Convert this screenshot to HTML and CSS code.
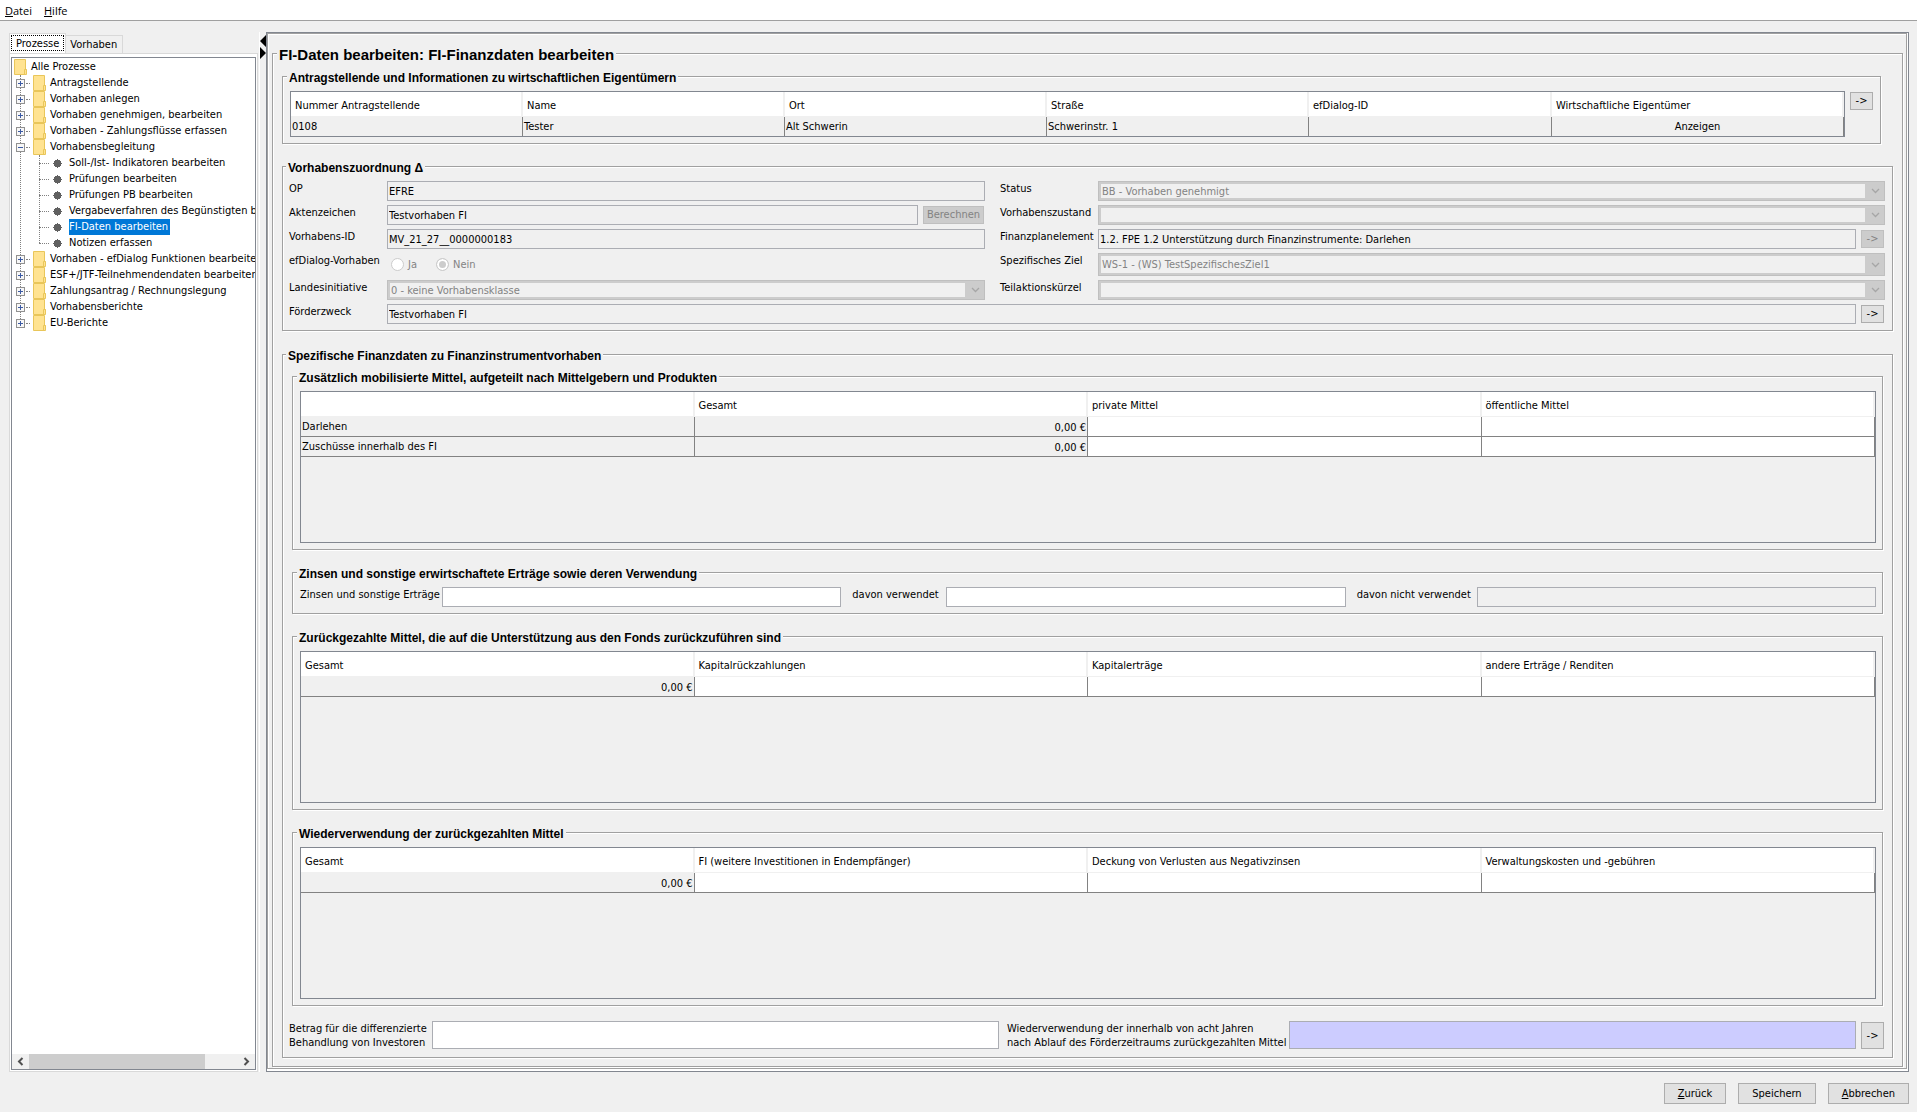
FILE: index.html
```html
<!DOCTYPE html>
<html lang="de">
<head>
    <meta charset="UTF-8">
    <meta name="viewport" content="width=device-width, initial-scale=1.0">
    <title>FI-Daten bearbeiten</title>
    <link rel="stylesheet" href="styles.css">
</head>
<body>
    <svg class="sprite" aria-hidden="true">
        <symbol id="folder" viewBox="0 0 13 16">
            <path d="M0.5 0.5h11v10h1v5h-12z" fill="#ffe391" stroke="#e9c65a"/>
            <path d="M10.5 15.5v-5h2" fill="none" stroke="#e9c65a"/>
        </symbol>
        <symbol id="plus" viewBox="0 0 9 9">
            <rect x="0.5" y="0.5" width="8" height="8" fill="#f7f7f7" stroke="#919191"/>
            <path d="M2 4.5h5M4.5 2v5" stroke="#3b5aa3"/>
        </symbol>
        <symbol id="minus" viewBox="0 0 9 9">
            <rect x="0.5" y="0.5" width="8" height="8" fill="#f7f7f7" stroke="#919191"/>
            <path d="M2 4.5h5" stroke="#3b5aa3"/>
        </symbol>
        <symbol id="leaf" viewBox="0 0 9 9">
            <path d="M4 0h1v1h2v1h1v2h1v1h-1v2h-1v1h-2v1h-1v-1h-2v-1h-1v-2h-1v-1h1v-2h1v-1h2z" fill="#606060"/>
        </symbol>
        <symbol id="chevron" viewBox="0 0 9 6">
            <path d="M1 1l3.500 3.500l3.500-3.500" fill="none" stroke="#a6a6a6" stroke-width="1.300"/>
        </symbol>
    </svg>

    <nav class="menubar">
        <a href="#"><u>D</u>atei</a>
        <a href="#"><u>H</u>ilfe</a>
    </nav>

    <div class="workspace">
        <aside class="sidebar">
            <div class="tabs">
                <button class="tab active">Prozesse</button>
                <button class="tab">Vorhaben</button>
            </div>
            <div class="tab-panel">
                <div class="tree">
                    <div class="tree-view">
                        <div class="node root"><svg class="folder"><use href="#folder"/></svg><span>Alle Prozesse</span></div>
                        <ul class="branches">
                            <li><div class="node"><button class="toggle" aria-label="Öffnen"><svg><use href="#plus"/></svg></button><svg class="folder"><use href="#folder"/></svg><span>Antragstellende</span></div></li>
                            <li><div class="node"><button class="toggle" aria-label="Öffnen"><svg><use href="#plus"/></svg></button><svg class="folder"><use href="#folder"/></svg><span>Vorhaben anlegen</span></div></li>
                            <li><div class="node"><button class="toggle" aria-label="Öffnen"><svg><use href="#plus"/></svg></button><svg class="folder"><use href="#folder"/></svg><span>Vorhaben genehmigen, bearbeiten</span></div></li>
                            <li><div class="node"><button class="toggle" aria-label="Öffnen"><svg><use href="#plus"/></svg></button><svg class="folder"><use href="#folder"/></svg><span>Vorhaben - Zahlungsflüsse erfassen</span></div></li>
                            <li>
                                <div class="node"><button class="toggle" aria-label="Schließen"><svg><use href="#minus"/></svg></button><svg class="folder"><use href="#folder"/></svg><span>Vorhabensbegleitung</span></div>
                                <ul class="leaves">
                                    <li class="node"><svg class="leaf"><use href="#leaf"/></svg><span>Soll-/Ist- Indikatoren bearbeiten</span></li>
                                    <li class="node"><svg class="leaf"><use href="#leaf"/></svg><span>Prüfungen bearbeiten</span></li>
                                    <li class="node"><svg class="leaf"><use href="#leaf"/></svg><span>Prüfungen PB bearbeiten</span></li>
                                    <li class="node"><svg class="leaf"><use href="#leaf"/></svg><span>Vergabeverfahren des Begünstigten bearbeiten</span></li>
                                    <li class="node"><svg class="leaf"><use href="#leaf"/></svg><span class="selected">FI-Daten bearbeiten</span></li>
                                    <li class="node"><svg class="leaf"><use href="#leaf"/></svg><span>Notizen erfassen</span></li>
                                </ul>
                            </li>
                            <li><div class="node"><button class="toggle" aria-label="Öffnen"><svg><use href="#plus"/></svg></button><svg class="folder"><use href="#folder"/></svg><span>Vorhaben - efDialog Funktionen bearbeiten</span></div></li>
                            <li><div class="node"><button class="toggle" aria-label="Öffnen"><svg><use href="#plus"/></svg></button><svg class="folder"><use href="#folder"/></svg><span>ESF+/JTF-Teilnehmendendaten bearbeiten</span></div></li>
                            <li><div class="node"><button class="toggle" aria-label="Öffnen"><svg><use href="#plus"/></svg></button><svg class="folder"><use href="#folder"/></svg><span>Zahlungsantrag / Rechnungslegung</span></div></li>
                            <li><div class="node"><button class="toggle" aria-label="Öffnen"><svg><use href="#plus"/></svg></button><svg class="folder"><use href="#folder"/></svg><span>Vorhabensberichte</span></div></li>
                            <li><div class="node"><button class="toggle" aria-label="Öffnen"><svg><use href="#plus"/></svg></button><svg class="folder"><use href="#folder"/></svg><span>EU-Berichte</span></div></li>
                        </ul>
                    </div>
                    <div class="scrollbar">
                        <svg viewBox="0 0 17 15"><path d="M10.500 4l-3.500 3.500l3.500 3.500" fill="none" stroke="#505050" stroke-width="2"/></svg>
                        <div class="track"><div class="thumb"></div></div>
                        <svg viewBox="0 0 17 15"><path d="M6.500 4l3.500 3.500l-3.500 3.500" fill="none" stroke="#505050" stroke-width="2"/></svg>
                    </div>
                </div>
            </div>
        </aside>

        <div class="splitter">
            <svg viewBox="0 0 6 24"><path d="M6 0v12l-6-6zM0 12v12l6-6z"/></svg>
        </div>

        <main class="content">
            <div class="content-inner">
                <fieldset class="page">
                    <legend>FI-Daten bearbeiten: FI-Finanzdaten bearbeiten</legend>

                    <fieldset class="group applicants">
                        <legend>Antragstellende und Informationen zu wirtschaftlichen Eigentümern</legend>
                        <div class="pane-row">
                            <div class="pane pane-short">
                                <table>
                                    <colgroup>
                                        <col class="col-number"><col class="col-mid"><col class="col-mid"><col class="col-mid"><col class="col-dialog"><col class="col-owner">
                                    </colgroup>
                                    <thead>
                                        <tr><th>Nummer Antragstellende</th><th>Name</th><th>Ort</th><th>Straße</th><th>efDialog-ID</th><th>Wirtschaftliche Eigentümer</th></tr>
                                    </thead>
                                    <tbody>
                                        <tr><td>0108</td><td>Tester</td><td>Alt Schwerin</td><td>Schwerinstr. 1</td><td></td><td class="center">Anzeigen</td></tr>
                                    </tbody>
                                </table>
                            </div>
                            <button class="btn go">-&gt;</button>
                        </div>
                    </fieldset>

                    <fieldset class="group">
                        <legend>Vorhabenszuordnung Δ</legend>
                        <div class="form-grid">
                            <label for="op">OP</label>
                            <input type="text" id="op" value="EFRE" readonly>
                            <label for="status" class="second">Status</label>
                            <div class="combo"><select id="status" disabled><option>BB - Vorhaben genehmigt</option></select><svg><use href="#chevron"/></svg></div>

                            <label for="aktenzeichen">Aktenzeichen</label>
                            <div class="with-button">
                                <input type="text" id="aktenzeichen" value="Testvorhaben FI" readonly>
                                <button class="btn calc" disabled>Berechnen</button>
                            </div>
                            <label for="zustand" class="second">Vorhabenszustand</label>
                            <div class="combo"><select id="zustand" disabled><option></option></select><svg><use href="#chevron"/></svg></div>

                            <label for="vorhabens-id">Vorhabens-ID</label>
                            <input type="text" id="vorhabens-id" value="MV_21_27__0000000183" readonly>
                            <label for="finanzplan" class="second">Finanzplanelement</label>
                            <div class="with-button">
                                <input type="text" id="finanzplan" value="1.2. FPE 1.2 Unterstützung durch Finanzinstrumente: Darlehen" readonly>
                                <button class="btn go" disabled>-&gt;</button>
                            </div>

                            <span class="label">efDialog-Vorhaben</span>
                            <div class="radios">
                                <input type="radio" name="efdialog" id="ja" disabled><label for="ja">Ja</label>
                                <input type="radio" name="efdialog" id="nein" checked disabled><label for="nein">Nein</label>
                            </div>
                            <label for="ziel" class="second">Spezifisches Ziel</label>
                            <div class="combo tall"><select id="ziel" disabled><option>WS-1 - (WS) TestSpezifischesZiel1</option></select><svg><use href="#chevron"/></svg></div>

                            <label for="landesinitiative">Landesinitiative</label>
                            <div class="combo"><select id="landesinitiative" disabled><option>0 - keine Vorhabensklasse</option></select><svg><use href="#chevron"/></svg></div>
                            <label for="teilaktion" class="second">Teilaktionskürzel</label>
                            <div class="combo"><select id="teilaktion" disabled><option></option></select><svg><use href="#chevron"/></svg></div>

                            <label for="foerderzweck">Förderzweck</label>
                            <div class="with-button wide">
                                <input type="text" id="foerderzweck" value="Testvorhaben FI" readonly>
                                <button class="btn go">-&gt;</button>
                            </div>
                        </div>
                    </fieldset>

                    <fieldset class="group finance">
                        <legend>Spezifische Finanzdaten zu Finanzinstrumentvorhaben</legend>

                        <fieldset class="group sub">
                            <legend>Zusätzlich mobilisierte Mittel, aufgeteilt nach Mittelgebern und Produkten</legend>
                            <div class="pane">
                                <table>
                                    <thead>
                                        <tr><th></th><th>Gesamt</th><th>private Mittel</th><th>öffentliche Mittel</th></tr>
                                    </thead>
                                    <tbody>
                                        <tr><td>Darlehen</td><td class="num">0,00 €</td><td class="edit"></td><td class="edit"></td></tr>
                                        <tr><td>Zuschüsse innerhalb des FI</td><td class="num">0,00 €</td><td class="edit"></td><td class="edit"></td></tr>
                                    </tbody>
                                </table>
                            </div>
                        </fieldset>

                        <fieldset class="group sub">
                            <legend>Zinsen und sonstige erwirtschaftete Erträge sowie deren Verwendung</legend>
                            <div class="interest-row">
                                <label for="zinsen">Zinsen und sonstige Erträge</label>
                                <input type="text" id="zinsen">
                                <label for="verwendet">davon verwendet</label>
                                <input type="text" id="verwendet">
                                <label for="nicht-verwendet">davon nicht verwendet</label>
                                <input type="text" id="nicht-verwendet" readonly>
                            </div>
                        </fieldset>

                        <fieldset class="group sub">
                            <legend>Zurückgezahlte Mittel, die auf die Unterstützung aus den Fonds zurückzuführen sind</legend>
                            <div class="pane">
                                <table>
                                    <thead>
                                        <tr><th>Gesamt</th><th>Kapitalrückzahlungen</th><th>Kapitalerträge</th><th>andere Erträge / Renditen</th></tr>
                                    </thead>
                                    <tbody>
                                        <tr><td class="num">0,00 €</td><td class="edit"></td><td class="edit"></td><td class="edit"></td></tr>
                                    </tbody>
                                </table>
                            </div>
                        </fieldset>

                        <fieldset class="group sub">
                            <legend>Wiederverwendung der zurückgezahlten Mittel</legend>
                            <div class="pane">
                                <table>
                                    <thead>
                                        <tr><th>Gesamt</th><th>FI (weitere Investitionen in Endempfänger)</th><th>Deckung von Verlusten aus Negativzinsen</th><th>Verwaltungskosten und -gebühren</th></tr>
                                    </thead>
                                    <tbody>
                                        <tr><td class="num">0,00 €</td><td class="edit"></td><td class="edit"></td><td class="edit"></td></tr>
                                    </tbody>
                                </table>
                            </div>
                        </fieldset>

                        <div class="amount-row">
                            <label for="betrag">Betrag für die differenzierte<br>Behandlung von Investoren</label>
                            <input type="text" id="betrag">
                            <label for="wiederverwendung">Wiederverwendung der innerhalb von acht Jahren<br>nach Ablauf des Förderzeitraums zurückgezahlten Mittel</label>
                            <div class="with-button">
                                <input type="text" id="wiederverwendung" class="required">
                                <button class="btn go">-&gt;</button>
                            </div>
                        </div>
                    </fieldset>
                </fieldset>
            </div>
        </main>
    </div>

    <footer class="actions">
        <button class="btn"><u>Z</u>urück</button>
        <button class="btn">Speichern</button>
        <button class="btn"><u>A</u>bbrechen</button>
    </footer>
</body>
</html>
```
FILE: styles.css
```css
* {
    box-sizing: border-box;
}

body {
    margin: 0;
    min-height: 100vh;
    display: flex;
    flex-direction: column;
    background: #f0f0f0;
    color: #000;
    font-family: Tahoma, "DejaVu Sans Condensed", sans-serif;
    font-size: 11px;
    line-height: 14px;
}

button, input, select {
    margin: 0;
    font: inherit;
    color: inherit;
    border-radius: 0;
}

svg {
    display: block;
    flex: none;
}

ul {
    list-style: none;
    margin: 0;
    padding: 0;
}

label, .label {
    padding-top: 1px;
    white-space: nowrap;
}

.sprite {
    display: none;
}

/* menu */
.menubar {
    display: flex;
    gap: 12px;
    height: 21px;
    padding: 4px 5px 2px;
    background: #fff;
    border-bottom: 1px solid #a0a0a0;
    font-family: "Segoe UI", "Open Sans", sans-serif;
}

.menubar a {
    color: #000;
    text-decoration: none;
}

.workspace {
    flex: 1;
    display: flex;
    padding: 11px 8px 0 9px;
}

/* process tree */
.sidebar {
    display: flex;
    flex-direction: column;
    width: 249px;
}

.tabs {
    display: flex;
    align-items: flex-end;
    height: 21px;
}

.tab {
    height: 18px;
    padding: 1px 5px 0 4px;
    background: #f0f0f0;
    border: 1px solid #d9d9d9;
    border-left: 0;
    border-bottom: 0;
}

.tab.active {
    height: 20px;
    background: #fff;
    border-left: 1px solid #d9d9d9;
    outline: 1px dotted #000;
    outline-offset: -3px;
    padding: 0 6px;
}

.tab-panel {
    flex: 1;
    display: flex;
    padding: 3px 1px 1px;
    background: #fff;
    border: 1px solid #d9d9d9;
}

.tree {
    flex: 1;
    min-width: 0;
    display: flex;
    flex-direction: column;
    border: 1px solid #828790;
}

.tree-view {
    flex: 1;
    padding-top: 1px;
    overflow: hidden;
    white-space: nowrap;
}

.node {
    display: flex;
    align-items: center;
    height: 16px;
}

.node span {
    line-height: 16px;
}

.root {
    padding-left: 2px;
}

.folder {
    width: 13px;
    height: 16px;
    margin-right: 4px;
}

.branches {
    position: relative;
    padding-left: 4px;
}

.branches::before {
    content: "";
    position: absolute;
    left: 8px;
    top: 0;
    bottom: 8px;
    border-left: 1px dotted #808080;
}

.toggle {
    position: relative;
    flex: none;
    width: 9px;
    height: 9px;
    margin-right: 8px;
    padding: 0;
    border: 0;
    background: none;
}

.toggle::after {
    content: "";
    position: absolute;
    left: 10px;
    top: 4px;
    width: 4px;
    border-top: 1px dotted #808080;
}

.toggle svg {
    width: 9px;
    height: 9px;
}

.leaves {
    position: relative;
    margin-left: 23px;
}

.leaves::before {
    content: "";
    position: absolute;
    left: 0;
    top: 0;
    bottom: 8px;
    border-left: 1px dotted #808080;
}

.leaves .node::before {
    content: "";
    flex: none;
    width: 10px;
    margin-right: 4px;
    border-top: 1px dotted #808080;
}

.leaf {
    width: 9px;
    height: 9px;
    margin-right: 7px;
}

.selected {
    background: #0078d7;
    color: #fff;
    padding-right: 2px;
}

.scrollbar {
    display: flex;
    height: 15px;
    background: #f0f0f0;
}

.scrollbar svg {
    width: 17px;
    height: 15px;
}

.track {
    flex: 1;
}

.thumb {
    width: 84%;
    height: 15px;
    background: #cdcdcd;
}

.splitter {
    width: 8px;
    padding: 3px 0 0 1px;
    border-left: 1px solid #f0f0f0;
    box-shadow: inset 1px 0 #fff;
}

.splitter svg {
    width: 6px;
    height: 24px;
}

/* form frame */
.content {
    flex: 1;
    min-width: 0;
    padding: 0 1px 2px 0;
    border: 1px solid #828790;
    background: #fff;
}

.content-inner {
    height: 100%;
    padding: 11px 3px 1px 4px;
    background: #f0f0f0;
    border: 1px solid #a0a0a0;
    box-shadow: inset 1px 1px #fff;
}

fieldset {
    min-width: 0;
    margin: 0;
    border: 1px solid #a0a0a0;
    box-shadow: inset 1px 1px #fff, 1px 1px #fff;
}

legend {
    padding: 3px 2px 0;
    background: #f0f0f0;
    font-family: Arial, "Liberation Sans", sans-serif;
    font-weight: bold;
}

.page {
    padding: 7px 9px 8px;
}

.page > legend {
    margin-left: -5px;
    font-size: 15px;
    line-height: 14px;
}

.group {
    margin-top: 15px;
    padding: 7px 7px 6px 6px;
}

.group > legend {
    margin-left: -3px;
    font-size: 12px;
    line-height: 12px;
}

.applicants {
    margin: 0 12px 0 0;
    padding-left: 7px;
}

.finance {
    margin-top: 16px;
    padding-bottom: 7px;
}

.sub {
    margin: 15px 2px 0 3px;
    padding: 7px 6px 6px 7px;
}

.finance > legend + .sub {
    margin-top: 0;
}

/* tables */
.pane-row {
    display: flex;
    gap: 5px;
}

.pane-row .pane {
    flex: 1;
}

.pane-row .btn {
    height: 18px;
    margin-top: 1px;
}

.pane {
    height: 152px;
    overflow: hidden;
    border: 1px solid #828790;
}

.pane-short {
    height: 46px;
}

table {
    width: 100%;
    table-layout: fixed;
    border-collapse: separate;
    border-spacing: 0;
}

th {
    height: 25px;
    padding: 3px 4px 0;
    background: #fff;
    border-right: 2px solid #f0f0f0;
    border-bottom: 1px solid #f0f0f0;
    font-weight: normal;
    text-align: left;
    white-space: nowrap;
}

td {
    height: 20px;
    padding: 0 1px;
    border-right: 1px solid #828282;
    border-bottom: 1px solid #828282;
}

.num {
    padding-top: 2px;
    text-align: right;
}

.center {
    text-align: center;
}

.edit {
    background: #fff;
}

.col-number {
    width: 232px;
}

.col-mid {
    width: 262px;
}

.col-dialog {
    width: 243px;
}

.col-owner {
    width: 292px;
}

/* controls */
input[type="text"] {
    width: 100%;
    min-width: 0;
    height: 20px;
    padding: 1px 1px 0;
    background: #fff;
    border: 1px solid #abadb3;
}

input[type="text"]:read-only {
    background: #f0f0f0;
}

input[type="text"].required {
    background: #ccccff;
}

.combo {
    display: flex;
    align-items: center;
    height: 20px;
    padding: 2px 4px 2px 2px;
    background: #ccc;
    border: 1px solid #bfbfbf;
}

.combo.tall {
    height: 23px;
}

.combo select {
    flex: 1;
    min-width: 0;
    align-self: stretch;
    margin-right: 6px;
    padding: 1px 1px 0;
    appearance: none;
    background: #f0f0f0;
    border: 0;
    color: #838383;
    opacity: 1;
}

.combo svg {
    width: 9px;
    height: 6px;
}

.btn {
    height: 21px;
    padding: 0 13px;
    background: #e1e1e1;
    border: 1px solid #adadad;
    white-space: nowrap;
}

.btn:disabled {
    background: #ccc;
    border-color: #bfbfbf;
    color: #838383;
}

.btn.go {
    flex: none;
    width: 23px;
    padding: 0;
}

.btn.calc {
    padding: 0 3px;
}

.with-button {
    display: flex;
    gap: 5px;
    padding-right: 1px;
}

.with-button .btn {
    height: auto;
    margin: 1px 0;
    line-height: 12px;
}

.form-grid {
    display: grid;
    grid-template-columns: 98px 19fr 113px 25fr;
    row-gap: 4px;
}

.second {
    padding-left: 15px;
}

.wide {
    grid-column: 2 / -1;
}

.radios {
    display: flex;
    align-items: center;
    padding-left: 4px;
    color: #838383;
}

.radios label {
    margin: 0 19px 0 4px;
    padding: 0;
}

input[type="radio"] {
    appearance: none;
    width: 13px;
    height: 13px;
    background: #fff;
    border: 1px solid #ccc;
    border-radius: 50%;
}

input[type="radio"]:checked {
    background: #ccc;
    box-shadow: inset 0 0 0 2px #fff;
}

.interest-row {
    display: grid;
    grid-template-columns: 142px 1fr 105px 1fr 131px 1fr;
}

.interest-row input ~ label {
    padding-left: 11px;
}

.amount-row {
    display: grid;
    grid-template-columns: 143px 1fr 290px 1fr 29px;
    margin-top: 15px;
}

.amount-row input[type="text"] {
    height: 28px;
}

.amount-row input ~ label {
    padding-left: 8px;
}

.amount-row .with-button {
    grid-column: 4 / -1;
}

/* footer */
.actions {
    display: flex;
    justify-content: flex-end;
    gap: 12px;
    padding: 11px 8px 8px;
}
```
